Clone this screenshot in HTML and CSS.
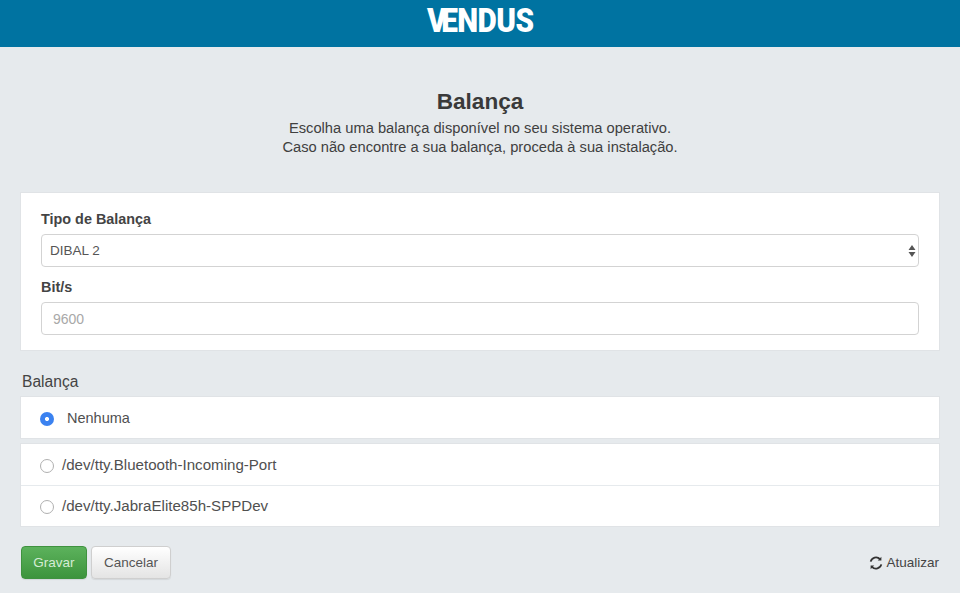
FILE: index.html
```html
<!DOCTYPE html>
<html lang="pt">
<head>
<meta charset="utf-8">
<title>Balança</title>
<link rel="stylesheet" href="styles.css">
</head>
<body>
<header class="topbar"><span class="logo"><span class="logo-v">V</span>ENDUS</span></header>
<main class="page">
  <section class="intro">
    <h1>Balança</h1>
    <p>Escolha uma balança disponível no seu sistema operativo.</p>
    <p>Caso não encontre a sua balança, proceda à sua instalação.</p>
  </section>
  <section class="panel form">
    <label class="field-label" for="tipo">Tipo de Balança</label>
    <div class="select-wrap">
      <select id="tipo" class="control"><option>DIBAL 2</option></select>
      <svg class="select-arrows" width="8" height="14" viewBox="0 0 8 14"><path d="M4 1 7.5 6H.5zM4 13 .5 8h7z" fill="#555"/></svg>
    </div>
    <label class="field-label second" for="bits">Bit/s</label>
    <input id="bits" class="control" placeholder="9600">
  </section>
  <h2 class="section-label">Balança</h2>
  <div class="panel list">
    <label class="row selected"><input type="radio" name="b" class="radio" checked><span>Nenhuma</span></label>
  </div>
  <div class="panel list">
    <label class="row"><input type="radio" name="b" class="radio"><span>/dev/tty.Bluetooth-Incoming-Port</span></label>
    <label class="row"><input type="radio" name="b" class="radio"><span>/dev/tty.JabraElite85h-SPPDev</span></label>
  </div>
  <footer class="actions">
    <button class="btn primary">Gravar</button>
    <button class="btn secondary">Cancelar</button>
    <a class="refresh">
      <svg width="14" height="14" viewBox="0 0 14 14" fill="none" stroke="#333" stroke-width="1.8"><path d="M1.7 5.6A5.4 5.4 0 0 1 11 3.2"/><path d="M12.3 8.4A5.4 5.4 0 0 1 3 10.8"/><path d="M12.4 .8v3.6H8.8z" fill="#333" stroke="none"/><path d="M1.6 13.2V9.6h3.6z" fill="#333" stroke="none"/></svg>
      Atualizar
    </a>
  </footer>
</main>
</body>
</html>
```
FILE: styles.css
```css
* { box-sizing: border-box; }
html, body { height: 100%; }
body {
  margin: 0;
  background: #e6eaed;
  color: #404040;
  font-family: "Liberation Sans", Arial, sans-serif;
  font-size: 14px;
  line-height: 20px;
  overflow: hidden;
}
.topbar {
  height: 47px;
  background: #0073a1;
  display: flex;
  justify-content: center;
  padding-top: 3px;
}
.logo {
  display: block;
  color: #fff;
  font-family: "Roboto", "Liberation Sans", sans-serif;
  font-weight: 900;
  font-size: 33px;
  line-height: 35px;
  letter-spacing: -0.6px;
  height: 35px;
  transform: scaleX(.9);
}
.logo-v { letter-spacing: -6px; }
.page { padding: 0 21px; }
.intro { text-align: center; padding-top: 43px; }
.intro h1 {
  margin: 0;
  font-size: 22.6px;
  line-height: 24px;
  font-weight: 700;
  color: #3a3a3a;
}
.intro p { margin: 0; font-size: 14.7px; line-height: 19px; }
.intro p:first-of-type { margin-top: 5px; }
.panel {
  background: #fff;
  box-shadow: 0 0 0 1px #e0e3e6;
}
.form { margin-top: 36px; height: 157px; padding: 16px 20px 0; }
.field-label {
  display: block;
  font-size: 14.4px;
  font-weight: 700;
  line-height: 20px;
  margin-bottom: 5px;
  color: #444;
}
.second { margin-top: 10px; margin-bottom: 5px; }
.select-wrap { position: relative; }
.control {
  display: block;
  width: 100%;
  height: 33px;
  border: 1px solid #d3d3d3;
  border-radius: 4px;
  background: #fff;
  padding: 0 8px;
  color: #555;
  font: 13.5px "Liberation Sans", Arial, sans-serif;
  appearance: none;
  -webkit-appearance: none;
  outline: none;
}
#bits { height: 33px; padding-left: 11px; font-size: 14px; }
#bits::placeholder { color: #a8a8a8; opacity: 1; }
.select-arrows { position: absolute; right: 3.5px; top: 10px; }
.section-label {
  margin: 22px 0 5px 1px;
  font-size: 15.6px;
  line-height: 20px;
  font-weight: 400;
  color: #444;
}
.list { margin-bottom: 6px; }
.row {
  display: flex;
  align-items: center;
  height: 41px;
  padding-left: 19px;
  gap: 8px;
  font-size: 15.1px;
  color: #505050;
}
.row + .row { border-top: 1px solid #e6eaed; }
.selected { gap: 13px; font-size: 14.5px; }
.radio {
  appearance: none;
  -webkit-appearance: none;
  margin: 2px 0 0;
  width: 14px;
  height: 14px;
  border: 1px solid #b0b0b0;
  border-radius: 50%;
  background: #fff;
  flex: none;
}
.radio:checked {
  border: 0;
  background: radial-gradient(circle, #fff 0 1.6px, #3b82f0 2.4px);
}
.actions {
  display: flex;
  align-items: center;
  gap: 4px;
  margin-top: 20px;
}
.btn {
  height: 33px;
  border: 1px solid #cfcfcf;
  border-radius: 4px;
  padding: 0;
  font: 13.5px "Liberation Sans", Arial, sans-serif;
  color: #555;
  background: linear-gradient(#fff, #e4e4e4);
  box-shadow: 0 1px 1px rgba(0,0,0,.08);
}
.primary {
  width: 66px;
  color: #d5ecd5;
  border-color: #3f923f;
  background: linear-gradient(#5cb25c, #3d943d);
}
.secondary { width: 80px; }
.refresh {
  margin-left: auto;
  display: flex;
  align-items: center;
  gap: 3px;
  color: #444;
  font-size: 13.5px;
}
```
